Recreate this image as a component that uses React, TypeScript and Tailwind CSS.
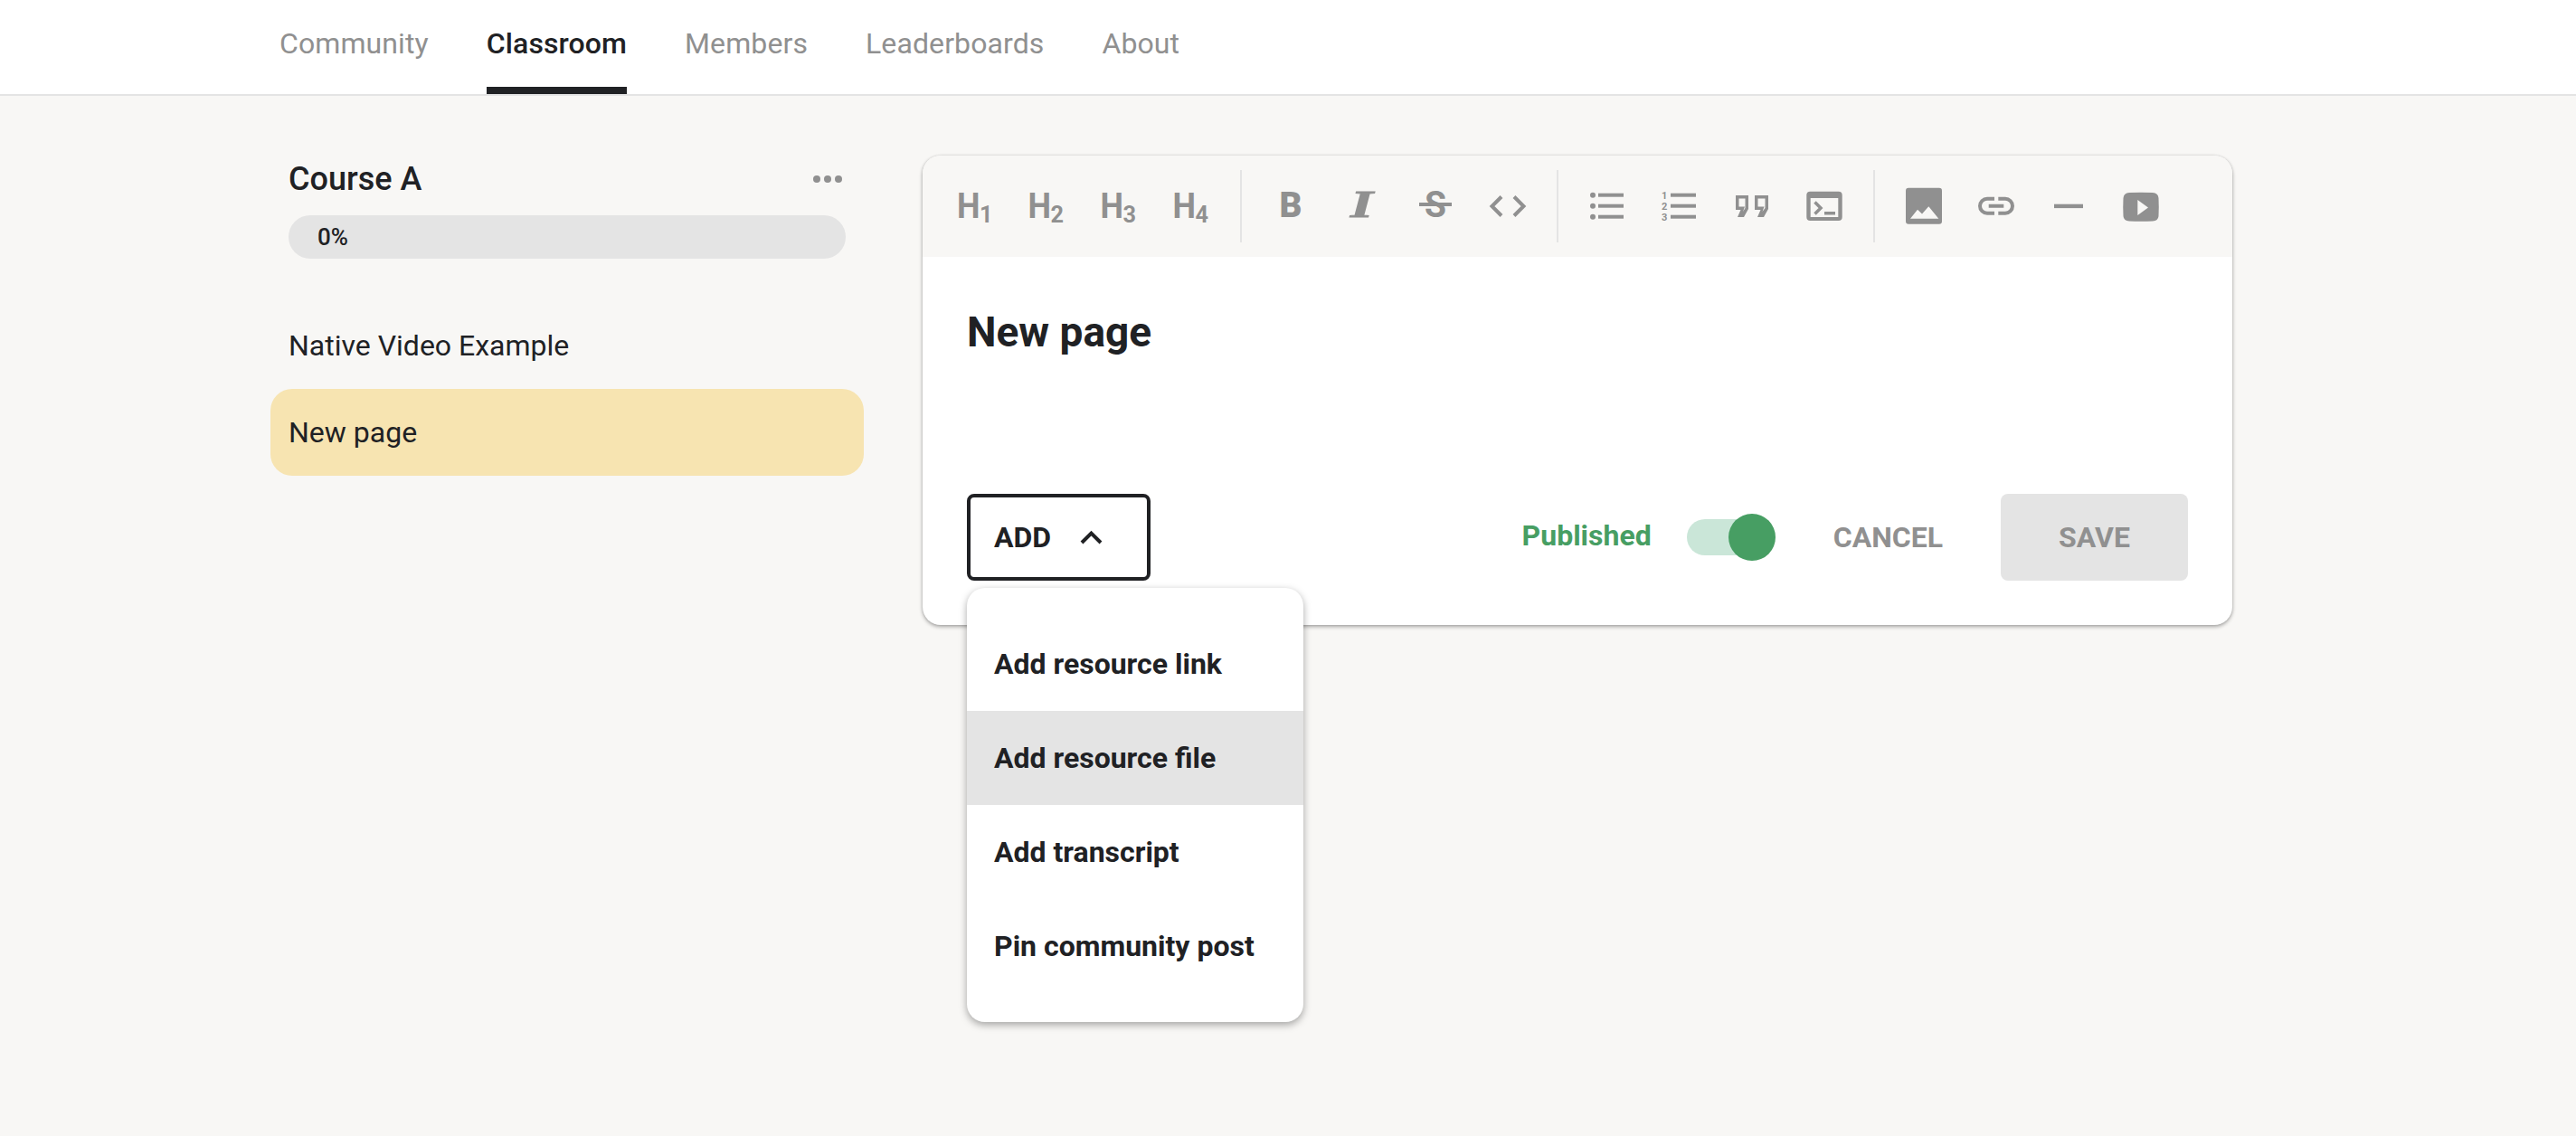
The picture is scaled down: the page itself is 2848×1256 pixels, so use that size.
import type { ReactNode } from 'react';

const GREY = '#909090';
const BG = '#F8F7F5';

function Icon({ children }: { children: ReactNode }) {
  return (
    <svg viewBox="0 0 48 48" className="h-12 w-12 shrink-0 overflow-visible" fill={GREY}>
      {children}
    </svg>
  );
}

function Heading({ level }: { level: number }) {
  return (
    <Icon>
      <text x={level === 1 ? 5 : 3.5} y="37" fontSize="38" fontWeight="700" textLength="25.5" lengthAdjust="spacingAndGlyphs" className="font-['Roboto']">
        H
      </text>
      <text x={level === 1 ? 30 : 28.5} y="41.5" fontSize="26" fontWeight="700" textLength="14.5" lengthAdjust="spacingAndGlyphs" className="font-['Roboto']">
        {level}
      </text>
    </Icon>
  );
}

function Divider() {
  return <div className="mx-[-2px] h-20 w-[2px] shrink-0 bg-[#E4E4E4]" />;
}

function Toolbar() {
  return (
    <div className="flex h-[112px] items-center gap-8 bg-[#F8F7F5] pl-[33px]">
      <Heading level={1} />
      <Heading level={2} />
      <Heading level={3} />
      <Heading level={4} />
      <Divider />
      {/* Bold */}
      <Icon>
        <text x="11.5" y="36" fontSize="39" fontWeight="900" textLength="25" lengthAdjust="spacingAndGlyphs" className="font-['Roboto']">
          B
        </text>
      </Icon>
      {/* Italic */}
      <Icon>
        <text x="10" y="36" fontSize="42" fontWeight="700" fontStyle="italic" textLength="25" lengthAdjust="spacingAndGlyphs" stroke={GREY} strokeWidth="1" className="font-['Liberation_Serif']">
          I
        </text>
      </Icon>
      {/* Strike */}
      <Icon>
        <text x="12" y="36" fontSize="41" fontWeight="700" textLength="24" lengthAdjust="spacingAndGlyphs" className="font-['Roboto']">
          S
        </text>
        <rect x="6" y="20" width="36" height="4" />
      </Icon>
      {/* Code */}
      <Icon>
        <path d="M17 13.5 L6.5 24 L17 34.5 M31 13.5 L41.5 24 L31 34.5" fill="none" stroke={GREY} strokeWidth="4" />
      </Icon>
      <Divider />
      {/* Bullet list */}
      <Icon>
        <circle cx="8" cy="11.7" r="3" />
        <circle cx="8" cy="23.7" r="3" />
        <circle cx="8" cy="35.7" r="3" />
        <rect x="14" y="9.7" width="28" height="4" />
        <rect x="14" y="21.7" width="28" height="4" />
        <rect x="14" y="33.7" width="28" height="4" />
      </Icon>
      {/* Numbered list */}
      <Icon>
        <text x="4" y="15.7" fontSize="11" fontWeight="700" className="font-['Roboto']">1</text>
        <text x="4" y="27.7" fontSize="11" fontWeight="700" className="font-['Roboto']">2</text>
        <text x="4" y="39.7" fontSize="11" fontWeight="700" className="font-['Roboto']">3</text>
        <rect x="14" y="9.7" width="28" height="4" />
        <rect x="14" y="21.7" width="28" height="4" />
        <rect x="14" y="33.7" width="28" height="4" />
      </Icon>
      {/* Quote */}
      <Icon>
        <path
          fillRule="evenodd"
          d="M6 12 H20 V27 L15 36 H8 L11.5 28 H6 Z M9.5 15.5 V24.5 H16 L14 30 L16.5 26 V15.5 Z M27 12 H42 V27 L37 36 H30 L33.5 28 H27 Z M30.5 15.5 V24.5 H37.5 L35.5 30 L38.5 26 V15.5 Z"
        />
      </Icon>
      {/* Terminal */}
      <Icon>
        <rect x="4.3" y="7.7" width="39.4" height="32.3" rx="4" />
        <rect x="8.7" y="15" width="30.6" height="21" fill={BG} />
        <path d="M13.5 19.5 L20 26 L13.5 32.5" fill="none" stroke={GREY} strokeWidth="3.5" />
        <rect x="24" y="30" width="12" height="3.5" />
      </Icon>
      <Divider />
      {/* Image */}
      <Icon>
        <rect x="4" y="3.7" width="40" height="40" rx="3" />
        <path d="M9 37.7 L17 27.7 L22 32.5 L29.3 24.3 L40.3 37.7 Z" fill={BG} />
      </Icon>
      {/* Link */}
      <Icon>
        <path d="M22 15.7 H14 a8 8 0 0 0 0 16 h8 M26.3 15.7 H34 a8 8 0 0 1 0 16 h-7.7 M15.7 23.7 H32.3" fill="none" stroke={GREY} strokeWidth="4" />
      </Icon>
      {/* Divider line */}
      <Icon>
        <rect x="8" y="21.7" width="32" height="4.4" />
      </Icon>
      {/* Video */}
      <Icon>
        <path d="M11 9 Q24 8.5 37 9 Q43 9.5 43.5 15 Q44 25 43.5 35 Q43 40 37 40.5 Q24 41 11 40.5 Q5 40 4.5 35 Q4 25 4.5 15 Q5 9.5 11 9 Z" />
        <path d="M20.3 17 L32 25.5 L20.3 34 Z" fill={BG} />
      </Icon>
    </div>
  );
}

function AddMenu() {
  const items = ['Add resource link', 'Add resource file', 'Add transcript', 'Pin community post'];
  return (
    <div className="absolute left-0 top-[104px] z-10 w-[372px] rounded-[20px] bg-white py-8 shadow-[0_3px_8px_rgba(0,0,0,0.35)]">
      {items.map((item, i) => (
        <div key={item} className={`flex h-[104px] items-center pl-[30px] text-[32px] font-bold ${i === 1 ? 'bg-[#E4E4E4]' : ''}`}>
          {item}
        </div>
      ))}
    </div>
  );
}

function Editor() {
  return (
    <div className="ml-[65px] h-[519px] w-[1448px] rounded-[20px] bg-white shadow-[0_2px_4px_rgba(0,0,0,0.32),0_0_3px_rgba(0,0,0,0.12)]">
      <div className="overflow-hidden rounded-t-[20px]">
        <Toolbar />
      </div>
      <div className="px-[49px] pt-[52px]">
        <h1 className="text-[46px] font-bold leading-[62px]">New page</h1>
        <div className="mt-[148px] flex items-center justify-between">
          <div className="relative">
            <button className="flex h-24 w-[203px] items-center gap-[29px] rounded-lg border-4 border-[#202124] pl-[26px] text-[32px] font-bold">
              ADD
              <svg viewBox="0 0 32 32" className="h-8 w-8" fill="none" stroke="#202124" strokeWidth="4">
                <path d="M5 22 L15.5 11.5 L26 22" />
              </svg>
            </button>
            <AddMenu />
          </div>
          <div className="flex items-center">
            <span className="pb-1 text-[32px] font-bold text-[#479E63]">Published</span>
            <div className="relative ml-[39px] flex h-[52px] w-[98px] items-center">
              <div className="h-10 w-[90px] rounded-full bg-[#CAE6D8]" />
              <div className="absolute right-0 top-0 h-[52px] w-[52px] rounded-full bg-[#479E63]" />
            </div>
            <span className="ml-16 text-[32px] font-bold text-[#909090]">CANCEL</span>
            <button className="ml-[64px] flex h-24 w-[207px] items-center justify-center rounded-lg bg-[#E4E4E4] text-[32px] font-bold text-[#909090]">
              SAVE
            </button>
          </div>
        </div>
      </div>
    </div>
  );
}

function Sidebar() {
  return (
    <div className="ml-[299px] w-[656px] shrink-0">
      <div className="px-5">
        <div className="flex h-12 items-center justify-between pr-1 pt-1">
          <span className="text-[36px] font-medium">Course A</span>
          <div className="flex gap-1">
            <span className="h-2 w-2 rounded-full bg-[#909090]" />
            <span className="h-2 w-2 rounded-full bg-[#909090]" />
            <span className="h-2 w-2 rounded-full bg-[#909090]" />
          </div>
        </div>
        <div className="mt-[18px] flex h-12 items-center rounded-full bg-[#E4E4E4] pl-8 text-[26px] font-medium">0%</div>
      </div>
      <div className="mt-12 flex h-24 items-center pl-5 text-[32px]">Native Video Example</div>
      <div className="flex h-24 items-center rounded-3xl bg-[#F7E4B1] pl-5 text-[32px]">New page</div>
    </div>
  );
}

export default function App() {
  const tabs = ['Community', 'Classroom', 'Members', 'Leaderboards', 'About'];
  return (
    <div className="min-h-screen overflow-hidden bg-[#F8F7F5] font-['Roboto',sans-serif] text-[#202124]">
      <nav className="flex h-[106px] gap-16 border-b-2 border-[#E4E4E4] bg-white pl-[309px]">
        {tabs.map((tab) => (
          <div
            key={tab}
            className={`flex items-center border-b-8 text-[32px] tracking-[0.1px] ${tab === 'Classroom' ? 'border-[#202124] font-medium text-[#202124]' : 'border-transparent text-[#909090]'}`}
          >
            {tab}
          </div>
        ))}
      </nav>
      <main className="flex pt-[66px]">
        <Sidebar />
        <Editor />
      </main>
    </div>
  );
}
